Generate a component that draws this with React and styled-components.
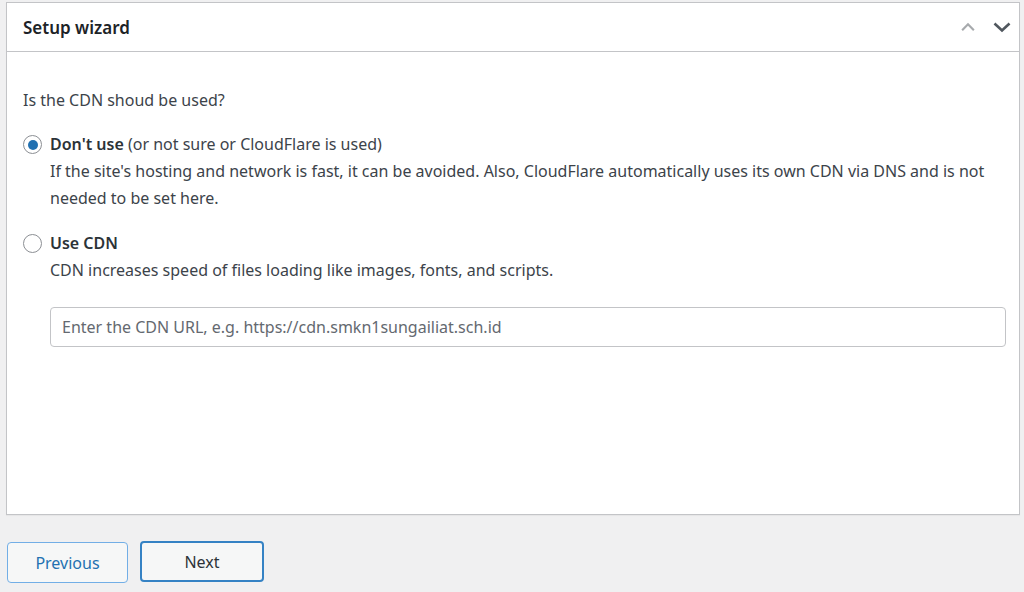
import React, { useState } from "react";
import styled, { createGlobalStyle } from "styled-components";

const GlobalStyle = createGlobalStyle`
  body {
    margin: 0;
    background: #f0f0f1;
    font-family: "Noto Sans", "Open Sans", sans-serif;
    color: #3c434a;
  }
`;

const Page = styled.div`
  padding: 2px 4px 0 6px;
`;

const Panel = styled.div`
  background: #fff;
  border: 1px solid #c3c4c7;
  box-shadow: 0 1px 1px rgba(0, 0, 0, 0.04);
  box-sizing: border-box;
  height: 513px;
  display: flex;
  flex-direction: column;
`;

const Header = styled.div`
  height: 48px;
  border-bottom: 1px solid #c3c4c7;
  display: flex;
  align-items: center;
  justify-content: space-between;
  padding-left: 16px;
`;

const Title = styled.h2`
  margin: 0;
  font-size: 17px;
  font-weight: 600;
  color: #1d2327;
`;

const HandleGroup = styled.div`
  display: flex;
  align-items: center;
  height: 100%;
`;

const Handle = styled.button`
  width: 34px;
  height: 100%;
  border: 0;
  background: transparent;
  padding: 0;
  display: flex;
  align-items: center;
  justify-content: center;
  color: ${(p) => (p.$muted ? "#a7aaad" : "#50575e")};
`;

const Body = styled.div`
  padding: 35px 13px 0 16px;
  font-size: 16px;
  line-height: 27px;
`;

const Question = styled.p`
  margin: 0 0 17px 0;
`;

const Option = styled.label`
  display: grid;
  grid-template-columns: 27px 1fr;
  margin-bottom: 18px;
  cursor: pointer;
`;

const Radio = styled.span`
  width: 19px;
  height: 19px;
  border: 1px solid #8c8f94;
  border-radius: 50%;
  margin-top: 4px;
  display: flex;
  align-items: center;
  justify-content: center;
  box-sizing: border-box;
  &::after {
    content: "";
    width: 10px;
    height: 10px;
    border-radius: 50%;
    background: ${(p) => (p.$checked ? "#2271b1" : "transparent")};
  }
`;

const OptionTitle = styled.div`
  color: #3c434a;
  strong {
    font-weight: 600;
    color: #2c3338;
  }
`;

const OptionDesc = styled.div`
  color: #3c434a;
`;

const UrlInput = styled.input`
  display: block;
  margin: 23px 0 0 27px;
  width: calc(100% - 27px);
  height: 40px;
  box-sizing: border-box;
  border: 1px solid #c3c4c7;
  border-radius: 4px;
  padding: 0 11px;
  font-family: inherit;
  font-size: 16px;
  color: #2c3338;
  &::placeholder {
    color: #646970;
  }
`;

const Footer = styled.div`
  display: flex;
  gap: 12px;
  padding: 26px 0 0 1px;
`;

const Button = styled.button`
  height: 41px;
  min-width: ${(p) => (p.$primary ? "124px" : "121px")};
  box-sizing: border-box;
  border-radius: 4px;
  background: #f6f7f7;
  font-family: inherit;
  font-size: 16px;
  cursor: pointer;
  color: ${(p) => (p.$primary ? "#2c3338" : "#2271b1")};
  border: ${(p) => (p.$primary ? "2px solid #3582c4" : "1px solid #72aee6")};
  margin-top: ${(p) => (p.$primary ? "0" : "1px")};
`;

const ChevronUp = () => (
  <svg width="18" height="18" viewBox="0 0 20 20" fill="none">
    <path d="M3.5 13.5L10 7l6.5 6.5" stroke="currentColor" strokeWidth="2.4" />
  </svg>
);

const ChevronDown = () => (
  <svg width="20" height="20" viewBox="0 0 20 20" fill="none">
    <path d="M2.5 6.5L10 13.5l7.5-7" stroke="currentColor" strokeWidth="2.6" />
  </svg>
);

export default function App() {
  const [choice, setChoice] = useState("none");

  return (
    <Page>
      <GlobalStyle />
      <Panel>
        <Header>
          <Title>Setup wizard</Title>
          <HandleGroup>
            <Handle $muted aria-label="Move up">
              <ChevronUp />
            </Handle>
            <Handle aria-label="Move down">
              <ChevronDown />
            </Handle>
          </HandleGroup>
        </Header>
        <Body>
          <Question>Is the CDN shoud be used?</Question>
          <Option onClick={() => setChoice("none")}>
            <Radio $checked={choice === "none"} />
            <div>
              <OptionTitle>
                <strong>Don't use</strong> (or not sure or CloudFlare is used)
              </OptionTitle>
              <OptionDesc>
                If the site's hosting and network is fast, it can be avoided. Also, CloudFlare
                automatically uses its own CDN via DNS and is not needed to be set here.
              </OptionDesc>
            </div>
          </Option>
          <Option onClick={() => setChoice("cdn")}>
            <Radio $checked={choice === "cdn"} />
            <div>
              <OptionTitle>
                <strong>Use CDN</strong>
              </OptionTitle>
              <OptionDesc>
                CDN increases speed of files loading like images, fonts, and scripts.
              </OptionDesc>
            </div>
          </Option>
          <UrlInput placeholder="Enter the CDN URL, e.g. https://cdn.smkn1sungailiat.sch.id" />
        </Body>
      </Panel>
      <Footer>
        <Button>Previous</Button>
        <Button $primary>Next</Button>
      </Footer>
    </Page>
  );
}
